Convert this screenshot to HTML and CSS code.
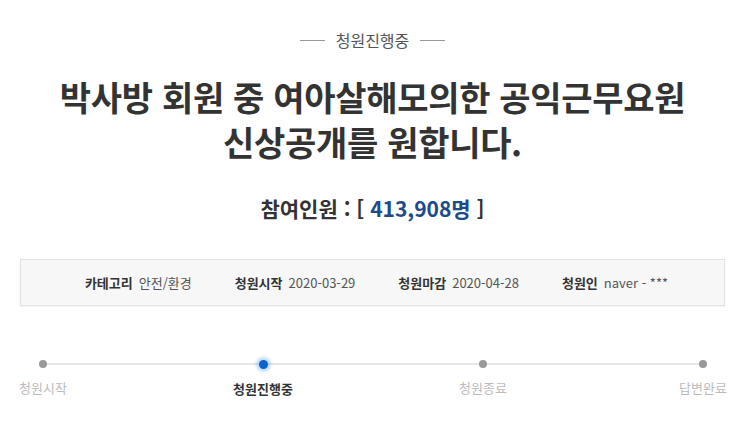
FILE: index.html
```html
<!DOCTYPE html>
<html lang="ko">
<head>
<meta charset="utf-8">
<link rel="stylesheet" href="styles.css">
</head>
<body>
<div class="page">
  <div class="status"><span class="rule"></span><span class="status-text">청원진행중</span><span class="rule"></span></div>
  <h1 class="title">박사방 회원 중 여아살해모의한 공익근무요원<br>신상공개를 원합니다.</h1>
  <div class="count">참여인원 : [ <span class="num">413,908명</span> ]</div>
  <div class="info">
    <div class="item"><span class="label">카테고리</span><span class="value">안전/환경</span></div>
    <div class="item"><span class="label">청원시작</span><span class="value">2020-03-29</span></div>
    <div class="item"><span class="label">청원마감</span><span class="value">2020-04-28</span></div>
    <div class="item"><span class="label">청원인</span><span class="value">naver - ***</span></div>
  </div>
  <div class="steps">
    <div class="step"><span class="dot"></span><span class="step-label">청원시작</span></div>
    <div class="step active"><span class="dot"></span><span class="step-label">청원진행중</span></div>
    <div class="step"><span class="dot"></span><span class="step-label">청원종료</span></div>
    <div class="step"><span class="dot"></span><span class="step-label">답변완료</span></div>
  </div>
</div>
</body>
</html>
```
FILE: styles.css
```css
html, body {
  margin: 0;
  padding: 0;
  background: #fff;
}
body {
  font-family: "Noto Sans CJK KR", "Noto Sans", sans-serif;
  color: #333;
  width: 745px;
  height: 423px;
  overflow: hidden;
}
.page {
  padding-top: 28px;
}
.status {
  display: flex;
  justify-content: center;
  align-items: center;
  gap: 11px;
  height: 24px;
}
.rule {
  width: 25px;
  height: 1px;
  background: #999;
}
.status-text {
  font-size: 16px;
  color: #555;
  line-height: 24px;
}
.title {
  margin: 22px 0 0;
  text-align: center;
  font-size: 34px;
  font-weight: 700;
  line-height: 45px;
  color: #333;
  letter-spacing: -0.3px;
}
.count {
  margin-top: 30px;
  text-align: center;
  font-size: 21px;
  font-weight: 700;
  line-height: 28px;
  color: #333;
}
.count .num {
  color: #1c4a8a;
}
.info {
  margin: 37px 20px 0;
  height: 45px;
  background: #f7f7f7;
  border: 1px solid #e2e2e2;
  box-shadow: 0 1px 2px rgba(0,0,0,0.06);
  display: flex;
  justify-content: center;
  align-items: center;
  gap: 43px;
  padding-left: 8px;
}
.item {
  display: flex;
  align-items: center;
  gap: 6px;
  font-size: 13px;
}
.label {
  font-weight: 700;
  color: #333;
}
.value {
  color: #555;
}
.steps {
  position: relative;
  margin: 49px 12px 0 13px;
  display: flex;
  justify-content: space-between;
}
.steps::before {
  content: "";
  position: absolute;
  left: 30px;
  right: 30px;
  top: 8px;
  height: 2px;
  background: #e6e6e6;
}
.step {
  position: relative;
  width: 60px;
  display: flex;
  flex-direction: column;
  align-items: center;
}
.dot {
  width: 8px;
  height: 8px;
  margin-top: 5px;
  border-radius: 50%;
  background: #999;
}
.step.active .dot {
  width: 9px;
  height: 9px;
  background: #0b62cf;
  box-shadow: 0 0 3px 3px rgba(60,140,235,0.3);
}
.step-label {
  margin-top: 10px;
  font-size: 13px;
  color: #bbb;
  white-space: nowrap;
  line-height: 20px;
}
.step.active .step-label {
  color: #333;
  font-weight: 700;
}
```
